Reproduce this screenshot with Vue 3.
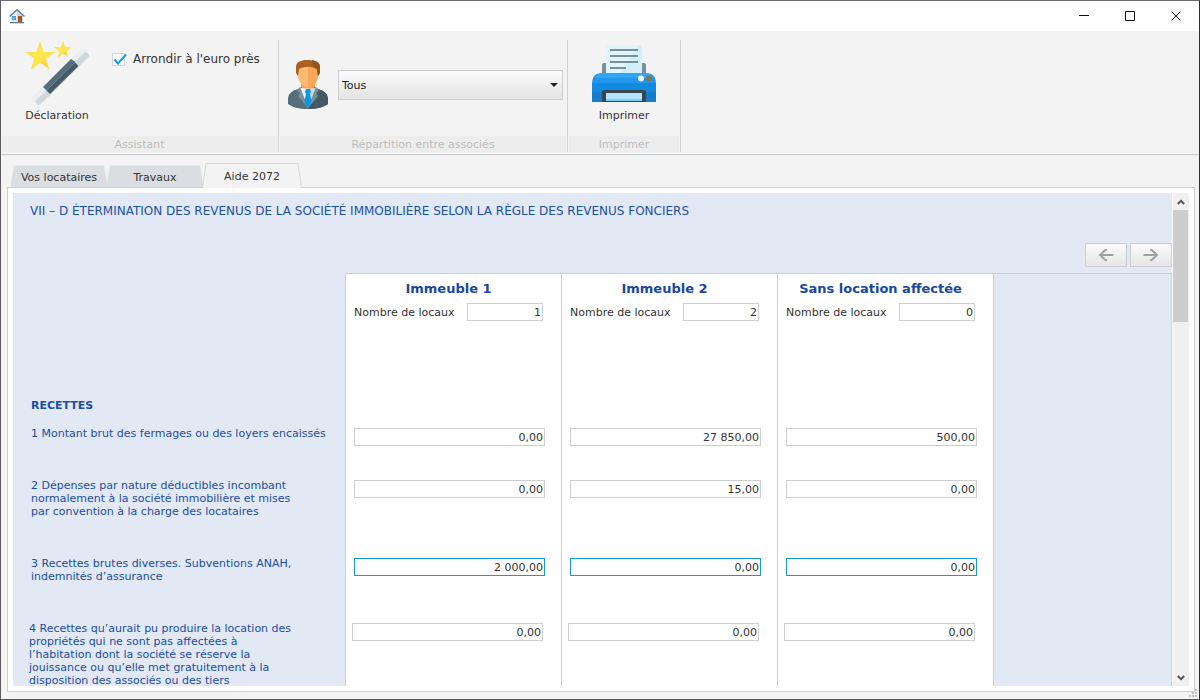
<script setup>
import { ref } from 'vue'

const roundToEuro = ref(true)
const partner = ref('Tous')
const activeTab = ref('Aide 2072')
const tabs = ['Vos locataires', 'Travaux', 'Aide 2072']

const buildings = ref([
  { name: 'Immeuble 1', units: '1' },
  { name: 'Immeuble 2', units: '2' },
  { name: 'Sans location affectée', units: '0' },
])

const rows = ref([
  {
    lines: ['1 Montant brut des fermages ou des loyers encaissés'],
    size: 'short',
    values: ['0,00', '27 850,00', '500,00'],
  },
  {
    lines: [
      '2 Dépenses par nature déductibles incombant',
      'normalement à la société immobilière et mises',
      'par convention à la charge des locataires',
    ],
    size: 'tall',
    values: ['0,00', '15,00', '0,00'],
  },
  {
    lines: ['3 Recettes brutes diverses. Subventions ANAH,', 'indemnités d’assurance'],
    size: 'medium',
    editable: true,
    values: ['2 000,00', '0,00', '0,00'],
  },
  {
    lines: [
      '4 Recettes qu’aurait pu produire la location des',
      'propriétés qui ne sont pas affectées à',
      'l’habitation dont la société se réserve la',
      'jouissance ou qu’elle met gratuitement à la',
      'disposition des associés ou des tiers',
    ],
    size: 'tall',
    outdent: true,
    values: ['0,00', '0,00', '0,00'],
  },
])
</script>

<template>
  <div class="window">
    <header class="titlebar">
      <svg class="app-icon" viewBox="0 0 16 15" aria-hidden="true">
        <path d="M2 7 8 1.500l6 5.500v6.500H2z" fill="#e9eef2" />
        <path d="M8 1.500l6 5.500v6.500H8z" fill="#cfd9e0" />
        <path d="M.5 7.500 8 .8l7.500 6.700" fill="none" stroke="#607d8b" stroke-width="1.500" />
        <path d="M3 7h4v4H3z" fill="#1c93d2" />
        <path d="M5 7v4M3 9h4" stroke="#d5eefb" stroke-width=".5" />
        <path d="M9 7h4v6H9z" fill="#b0561c" />
        <path d="M1 13h14v1.300H1z" fill="#607d8b" />
      </svg>
      <div class="window-buttons">
        <button type="button" aria-label="Réduire">
          <svg viewBox="0 0 11 11"><path d="M0 4.500h10" /></svg>
        </button>
        <button type="button" aria-label="Agrandir">
          <svg viewBox="0 0 11 11"><path d="M.5.5h9v9h-9z" /></svg>
        </button>
        <button type="button" aria-label="Fermer">
          <svg viewBox="0 0 11 11"><path d="M.5.5l9 9M9.500.5l-9 9" /></svg>
        </button>
      </div>
    </header>

    <section class="ribbon">
      <div class="group group-assistant">
        <div class="group-body">
          <button type="button" class="big-button">
            <svg class="icon-large" viewBox="0 0 64 64" aria-hidden="true">
              <path d="M15 .5 18.300 11H30l-9.500 6.500 4 11L15 21.500l-9 7 3.500-11L.5 11h11.200z" fill="#fdd835" />
              <path d="M15 .5 18.300 11H30L6 28.500l3.500-11L.5 11h11.200z" fill="#ffe54d" />
              <path d="M38 .5l2 5.800 6.500.2-5 3.500 1.800 6L38 12.400 33 16l1.700-6-5.200-3.500 6.500-.2z" fill="#fdd835" />
              <path d="M38 .5l2 5.800 6.500.2L33 16l1.700-6-5.200-3.500 6.500-.2z" fill="#ffe54d" />
              <path d="M56 8q1.500-1.500 3 0l2 2.500-51 51-3-3q-1-1.500.5-3z" fill="#eceff1" />
              <path d="M60.500 10.500l3 2.500q1 1.500 0 3L16 63q-2 2-3.500.5l-2.500-3z" fill="#cfd8dc" />
              <path d="M46 18 18 46l3.500 3.500 29-28.500z" fill="#546e7a" />
              <path d="M50 21.500l-28.500 28L25 53l28.500-28z" fill="#455a64" />
            </svg>
            <span>Déclaration</span>
          </button>
          <label class="check">
            <span class="check-box">
              <input v-model="roundToEuro" type="checkbox" />
              <svg v-if="roundToEuro" viewBox="0 0 15 15" aria-hidden="true">
                <path d="M2.500 6.500 6 10.500 14 1.500" />
              </svg>
            </span>
            <span>Arrondir à l'euro près</span>
          </label>
        </div>
        <div class="group-name">Assistant</div>
      </div>

      <div class="group group-partners">
        <div class="group-body partners-body">
          <svg class="icon-person" viewBox="0 0 40 49" aria-hidden="true">
            <path d="M0 40c0-7 4-9 10-11l5-3h10l5 3c6 2 10 4 10 11v4c-4 3-11 5-20 5S4 47 0 44z" fill="#546e7a" />
            <path d="M20 49c9 0 16-2 20-5v-4c0-7-4-9-10-11l-5-2-5 3z" fill="#455a64" />
            <path d="M12 28l8 20 8-20z" fill="#eef2f4" />
            <path d="M20 48l8-20h-8z" fill="#cfd8dc" />
            <path d="M12 27l-3 4 3 2-2 3 10 12zM28 27l3 4-3 2 2 3-10 12z" fill="#78909c" />
            <path d="M18 29h4l1 3-1 2 1.500 7L20 48l-3.500-7L18 34l-1-2z" fill="#039be5" />
            <path d="M13 20h14v7c-2 2-12 2-14 0z" fill="#fb9f4b" />
            <path d="M10 8l2-2h16l2 2v7c0 7-4 11-10 12-6-1-10-5-10-12z" fill="#ffb974" />
            <path d="M20 6h8l2 2v7c0 7-4 11-10 12z" fill="#fba758" />
            <path d="M8 13V7c0-5 5-7 11-7 8 0 13 2 13 7v6l-2 3-1-7c-6-3-12-3-18 0l-1 7z" fill="#a9611d" />
            <path d="M24 0c5 1 8 3 8 7v6l-2 3-1-7-4-2z" fill="#94541f" />
          </svg>
          <div class="select">
            <select v-model="partner" aria-label="Répartition entre associés">
              <option>Tous</option>
            </select>
            <svg viewBox="0 0 8 4" aria-hidden="true"><path d="M0 0h8L4 4z" fill="#222" /></svg>
          </div>
        </div>
        <div class="group-name">Répartition entre associés</div>
      </div>

      <div class="group group-print">
        <div class="group-body print-body">
          <button type="button" class="big-button">
            <svg class="icon-large" viewBox="0 0 64 64" aria-hidden="true">
              <path d="M10 24q0-2 2-2h40q2 0 2 2v12H10z" fill="#78909c" />
              <path d="M14 4h32l4 4v28H14z" fill="#e1f5fe" />
              <path d="M46 4h4v28H28z" fill="#d3effc" />
              <path d="M18 9h28M18 15h28M18 21h28M18 27h16" stroke="#78909c" stroke-width="2" />
              <path d="M0 43q0-11 10-11h44q10 0 10 11v8H0z" fill="#2196ea" />
              <path d="M3 37q3-5 8-5h42q5 0 8 5z" fill="#31a6f2" />
              <path d="M0 42h64v9H0z" fill="#108be0" />
              <path d="M0 51h64v10H0z" fill="#147dc9" />
              <path d="M10 61V51q0-2 2-2h40q2 0 2 2v10z" fill="#37474f" />
              <path d="M14 52h36v8H14z" fill="#b3e5fc" />
              <path d="M14 58h36v2H14z" fill="#81cdf3" />
              <circle cx="49" cy="37.500" r="3" fill="#fff" />
              <circle cx="57" cy="37.500" r="3" fill="#827753" />
            </svg>
            <span>Imprimer</span>
          </button>
        </div>
        <div class="group-name">Imprimer</div>
      </div>
    </section>

    <nav class="tabs" role="tablist">
      <button
        v-for="tab in tabs"
        :key="tab"
        type="button"
        role="tab"
        class="tab"
        :class="{ active: tab === activeTab }"
        :aria-selected="tab === activeTab"
        @click="activeTab = tab"
      >
        <svg viewBox="0 0 100 25" preserveAspectRatio="none" aria-hidden="true">
          <path d="M.5 25 4 .5H96L99.500 25" vector-effect="non-scaling-stroke" />
        </svg>
        <span>{{ tab }}</span>
      </button>
    </nav>

    <main class="panel">
      <div class="content">
        <h1>VII – D ÉTERMINATION DES REVENUS DE LA SOCIÉTÉ IMMOBILIÈRE SELON LA RÈGLE DES REVENUS FONCIERS</h1>
        <div class="pager">
          <button type="button" aria-label="Précédent">
            <svg viewBox="0 0 16 12"><path d="M15.500 6H2M9 .8H7.500L2 6l5.500 5.200H9" /></svg>
          </button>
          <button type="button" aria-label="Suivant">
            <svg viewBox="0 0 16 12"><path d="M.5 6H14M7 .8h1.500L14 6l-5.500 5.200H7" /></svg>
          </button>
        </div>

        <table>
          <colgroup>
            <col class="col-label" />
            <col v-for="b in buildings" :key="b.name" class="col-building" />
            <col />
          </colgroup>
          <thead>
            <tr>
              <td class="label"></td>
              <th v-for="(b, i) in buildings" :key="b.name" scope="col" class="building">
                <div class="building-name">{{ b.name }}</div>
                <div class="units">
                  <label :for="'units-' + i">Nombre de locaux</label>
                  <input :id="'units-' + i" v-model="b.units" type="text" />
                </div>
              </th>
              <td class="rest"></td>
            </tr>
          </thead>
          <tbody>
            <tr class="section">
              <th scope="row" class="label">RECETTES</th>
              <td v-for="b in buildings" :key="b.name" class="amount"></td>
              <td class="rest"></td>
            </tr>
            <tr v-for="row in rows" :key="row.lines[0]" :class="[row.size, { outdent: row.outdent, editable: row.editable }]">
              <th scope="row" class="label">
                <div v-for="line in row.lines" :key="line">{{ line }}</div>
              </th>
              <td v-for="(b, i) in buildings" :key="b.name" class="amount">
                <input v-model="row.values[i]" type="text" :aria-label="row.lines.join(' ') + ', ' + b.name" />
              </td>
              <td class="rest"></td>
            </tr>
          </tbody>
        </table>
      </div>

      <div class="scrollbar">
        <button type="button" aria-label="Défiler vers le haut">
          <svg viewBox="0 0 8 6"><path d="M.8 5 4 1.800 7.200 5" /></svg>
        </button>
        <div class="track"><div class="thumb"></div></div>
        <button type="button" aria-label="Défiler vers le bas">
          <svg viewBox="0 0 8 6"><path d="M.8 1 4 4.200 7.200 1" /></svg>
        </button>
      </div>
    </main>

    <svg class="grip" viewBox="0 0 8 8" aria-hidden="true">
      <path d="M6 0h2v2H6zM3 3h2v2H3zM6 3h2v2H6zM0 6h2v2H0zM3 6h2v2H3zM6 6h2v2H6z" fill="#bfbfbf" />
    </svg>
  </div>
</template>

<style>
body {
  margin: 0;
}
</style>

<style scoped>
.window,
.window * {
  box-sizing: border-box;
}

.window {
  position: relative;
  display: flex;
  flex-direction: column;
  height: 100vh;
  border: 1px solid;
  border-color: #6e6a70 #2f2f33 #555356 #5d5b5e;
  background: #f3f3f3;
  color: #333;
  font: 11px/13px Verdana, "DejaVu Sans", sans-serif;
}

button,
input,
select {
  margin: 0;
  font: inherit;
  color: inherit;
}

button {
  padding: 0;
  border: 0;
  background: none;
}

svg {
  display: block;
}

.titlebar {
  display: flex;
  flex: none;
  align-items: center;
  justify-content: space-between;
  height: 30px;
  padding-left: 8px;
  background: #fff;
}

.app-icon {
  width: 16px;
  height: 15px;
}

.window-buttons {
  display: flex;
  height: 100%;
}

.window-buttons button {
  display: flex;
  align-items: center;
  justify-content: center;
  width: 46px;
}

.window-buttons svg {
  width: 11px;
  height: 11px;
  fill: none;
  stroke: #111;
  stroke-width: 1;
}

.ribbon {
  display: flex;
  flex: none;
  height: 124px;
  padding: 9px 0 2px;
  border-bottom: 1px solid #c9cacc;
}

.group {
  display: flex;
  flex-direction: column;
  padding: 0 1px;
  border-right: 1px solid #d0d1d3;
}

.group-assistant {
  width: 278px;
}

.group-partners {
  width: 289px;
}

.group-print {
  width: 113px;
}

.group-body {
  display: flex;
  flex: 1;
  align-items: flex-start;
}

.group-assistant .group-body {
  gap: 15px;
  padding-left: 15px;
}

.group-name {
  height: 16px;
  background: #ededed;
  color: #bdbdbd;
  line-height: 18px;
  text-align: center;
}

.big-button {
  display: flex;
  flex-direction: column;
  align-items: center;
  gap: 4px;
  width: 80px;
  padding-top: 1px;
}

.icon-large {
  width: 64px;
  height: 64px;
}

.check {
  display: flex;
  align-items: center;
  gap: 8px;
  padding-top: 12px;
  font-size: 12px;
  line-height: 15px;
}

.check-box {
  position: relative;
  width: 13px;
  height: 13px;
}

.check input {
  display: block;
  width: 13px;
  height: 13px;
  border: 1px solid #cdd5dc;
  background: #fff;
  appearance: none;
}

.check svg {
  position: absolute;
  top: 0;
  left: 0;
  width: 15px;
  height: 15px;
  fill: none;
  stroke: #0b9fe3;
  stroke-width: 2;
  pointer-events: none;
}

.partners-body {
  gap: 10px;
  padding: 20px 3px 0 8px;
}

.icon-person {
  flex: none;
  width: 40px;
  height: 49px;
}

.select {
  position: relative;
  flex: 1;
  margin-top: 10px;
}

.select select {
  display: block;
  width: 100%;
  height: 30px;
  padding: 0 20px 0 3px;
  border: 1px solid #cdced3;
  border-radius: 0;
  background: linear-gradient(#fbfbfb, #e4e4e4);
  color: #222;
  appearance: none;
}

.select svg {
  position: absolute;
  top: 13px;
  right: 5px;
  width: 8px;
  height: 4px;
  pointer-events: none;
}

.print-body {
  justify-content: center;
}

.tabs {
  display: flex;
  flex: none;
  align-items: flex-end;
  height: 32px;
  padding-left: 9px;
}

.tab {
  position: relative;
  width: 98px;
  height: 22px;
  margin-right: -2px;
  padding-top: 2px;
}

.tab.active {
  z-index: 1;
  width: 100px;
  height: 25px;
  margin-bottom: -1px;
}

.tab svg {
  position: absolute;
  inset: 0;
  width: 100%;
  height: 100%;
  fill: #dadde2;
}

.tab.active svg {
  fill: #f3f3f3;
  stroke: #d6d8dd;
  stroke-width: 1;
}

.tab span {
  position: relative;
}

.panel {
  display: flex;
  flex: 1;
  gap: 1px;
  min-height: 0;
  margin: 0 4px 7px 6px;
  padding: 5px;
  border: 1px solid #cdced2;
  background: #fff;
}

.content {
  flex: 1;
  min-width: 0;
  overflow: hidden;
  background: #e2e9f5;
}

h1 {
  margin: 0;
  padding: 11px 17px 24px;
  color: #1e4fa6;
  font-size: 12px;
  font-weight: normal;
  line-height: 15px;
}

.pager {
  display: flex;
  justify-content: flex-end;
  gap: 3px;
  margin-bottom: 6px;
}

.pager button {
  display: flex;
  align-items: center;
  justify-content: center;
  width: 42px;
  height: 24px;
  border: 1px solid #cdced3;
  background: linear-gradient(#fbfbfb, #e6e6e6);
}

.pager svg {
  width: 16px;
  height: 12px;
  fill: none;
  stroke: #a0a0a3;
  stroke-width: 2;
}

table {
  width: 100%;
  border-spacing: 0;
  table-layout: fixed;
}

.col-label {
  width: 332px;
}

.col-building {
  width: 216px;
}

th,
td {
  padding: 0;
  font-weight: normal;
  text-align: left;
  vertical-align: top;
}

.label {
  padding-left: 18px;
  color: #1b4da3;
  white-space: nowrap;
}

.building,
.amount {
  border-left: 1px solid #cdced2;
  background: #fff;
}

.rest {
  border-right: 1px solid #cdced2;
  border-left: 1px solid #cdced2;
}

thead .building,
thead .rest {
  border-top: 1px solid #cdced2;
}

.building {
  height: 126px;
  padding: 7px 18px 0 8px;
}

.building-name {
  color: #17489f;
  font-size: 13px;
  font-weight: bold;
  line-height: 16px;
  text-align: center;
  white-space: nowrap;
}

.units {
  display: flex;
  align-items: center;
  justify-content: space-between;
  margin-top: 6px;
}

.units label {
  white-space: nowrap;
}

.units input {
  width: 76px;
}

.building input,
.amount input {
  display: block;
  height: 18px;
  padding: 0 1px;
  border: 1px solid #cdced2;
  border-radius: 0;
  background: #fff;
  text-align: right;
}

.amount {
  padding: 1px 16px 0 8px;
}

.amount input {
  width: 100%;
}

.editable .amount input {
  border-color: #129bd8;
}

.section {
  height: 28px;
}

.section .label {
  font-weight: bold;
}

.short {
  height: 52px;
}

.medium {
  height: 65px;
}

.tall {
  height: 78px;
}

.outdent .label {
  padding-left: 16px;
}

.outdent .amount {
  padding-right: 18px;
  padding-left: 6px;
}

.scrollbar {
  display: flex;
  flex: none;
  flex-direction: column;
  width: 16px;
  background: #f0f0f0;
}

.scrollbar button {
  display: flex;
  align-items: center;
  justify-content: center;
  height: 17px;
}

.scrollbar svg {
  width: 8px;
  height: 6px;
  fill: none;
  stroke: #555;
  stroke-width: 2;
}

.track {
  flex: 1;
  padding-right: 1px;
}

.thumb {
  height: 112px;
  background: #cdcdcd;
}

.grip {
  position: absolute;
  right: 2px;
  bottom: 2px;
  width: 8px;
  height: 8px;
}
</style>
